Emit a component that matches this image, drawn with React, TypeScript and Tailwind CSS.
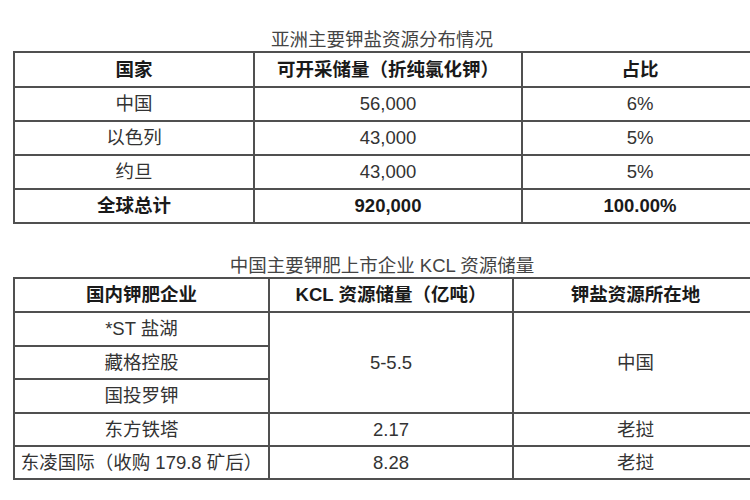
const font = { fontFamily: '"Liberation Sans", "Noto Sans CJK SC", sans-serif' };

const cell = "border-2 border-[#505050] text-center align-middle p-0";

const asia = [
  { name: "中国", amount: "56,000", share: "6%" },
  { name: "以色列", amount: "43,000", share: "5%" },
  { name: "约旦", amount: "43,000", share: "5%" },
];

export default function App() {
  return (
    <div className="w-[750px] h-[500px] overflow-hidden bg-white text-[#333] text-[18.5px]" style={font}>
      <div className="w-[744px] ml-[13px] pt-[29px]">
        <div className="text-center leading-[22px] h-[22px] text-[#444] pr-[6px]">亚洲主要钾盐资源分布情况</div>
        <table className="table-fixed border-collapse w-[744px]">
          <colgroup>
            <col className="w-[240px]" />
            <col className="w-[268px]" />
            <col className="w-[236px]" />
          </colgroup>
          <tbody>
            <tr className="h-[35px] font-bold text-[#1a1a1a]">
              <td className={cell}>国家</td>
              <td className={cell}>可开采储量（折纯氯化钾）</td>
              <td className={cell}>占比</td>
            </tr>
            {asia.map(r => (
              <tr key={r.name} className="h-[34px]">
                <td className={cell}>{r.name}</td>
                <td className={cell}>{r.amount}</td>
                <td className={cell}>{r.share}</td>
              </tr>
            ))}
            <tr className="h-[34px] font-bold text-[#1a1a1a]">
              <td className={cell}>全球总计</td>
              <td className={cell}>920,000</td>
              <td className={cell}>100.00%</td>
            </tr>
          </tbody>
        </table>

        <div className="text-center leading-[22px] h-[22px] mt-[31px] text-[#444] pr-[6px]">中国主要钾肥上市企业 KCL 资源储量</div>
        <table className="table-fixed border-collapse w-[744px]">
          <colgroup>
            <col className="w-[255px]" />
            <col className="w-[244px]" />
            <col className="w-[245px]" />
          </colgroup>
          <tbody>
            <tr className="h-[34px] font-bold text-[#1a1a1a]">
              <td className={cell}>国内钾肥企业</td>
              <td className={cell}>KCL 资源储量（亿吨）</td>
              <td className={cell}>钾盐资源所在地</td>
            </tr>
            <tr className="h-[34px]">
              <td className={cell}>*ST 盐湖</td>
              <td className={cell} rowSpan={3}>5-5.5</td>
              <td className={cell} rowSpan={3}>中国</td>
            </tr>
            <tr className="h-[33px]">
              <td className={cell}>藏格控股</td>
            </tr>
            <tr className="h-[34px]">
              <td className={cell}>国投罗钾</td>
            </tr>
            <tr className="h-[33px]">
              <td className={cell}>东方铁塔</td>
              <td className={cell}>2.17</td>
              <td className={cell}>老挝</td>
            </tr>
            <tr className="h-[33px]">
              <td className={cell + " whitespace-nowrap"}>东凌国际（收购 179.8 矿后）</td>
              <td className={cell}>8.28</td>
              <td className={cell}>老挝</td>
            </tr>
          </tbody>
        </table>
      </div>
    </div>
  );
}
